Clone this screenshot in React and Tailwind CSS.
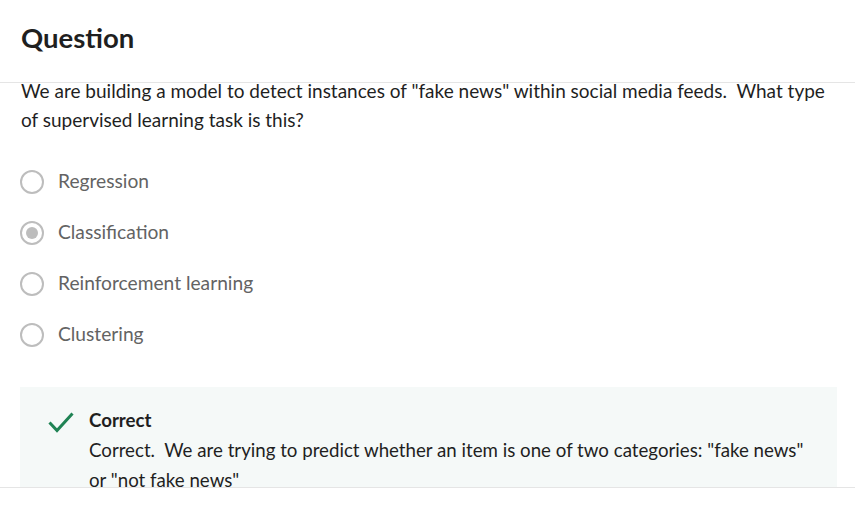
import React from "react";

const font = { fontFamily: '"Source Sans Pro", Lato, "Liberation Sans", sans-serif' };

function Radio({ checked }) {
  return (
    <span className="flex h-[24px] w-[24px] shrink-0 items-center justify-center rounded-full border-2 border-[#bdbdbd]">
      {checked && <span className="h-[12px] w-[12px] rounded-full bg-[#bdbdbd]" />}
    </span>
  );
}

export default function App() {
  const options = ["Regression", "Classification", "Reinforcement learning", "Clustering"];
  return (
    <div className="flex h-[509px] w-[855px] flex-col overflow-hidden bg-white" style={font}>
      <header className="relative z-10 flex h-[83px] shrink-0 items-center border-b border-[#e5e5e5] bg-white px-[21px] pb-[6px]">
        <h2 className="text-[27.5px] font-bold text-[#1f1f1f]">Question</h2>
      </header>
      <main className="flex-1 overflow-hidden pl-[20px] pr-[18px]">
        <p className="-mt-[7px] pl-[1px] text-[19px] leading-[29px] text-[#1f1f1f]">
          We are building a model to detect instances of "fake news" within social media feeds.&nbsp; What type of supervised learning task is this?
        </p>
        <div className="mt-[22px] flex flex-col">
          {options.map((o, i) => (
            <div key={o} className="flex h-[51px] items-center gap-[14px]">
              <Radio checked={i === 1} />
              <span className="text-[19.2px] text-[#636363]">{o}</span>
            </div>
          ))}
        </div>
        <div className="mt-[27px] flex gap-[15px] bg-[#f5f9f8] pl-[28px] pr-[24px] pt-[18px] pb-[20px]">
          <svg width="26" height="22" viewBox="0 0 26 22" className="mt-[6px] shrink-0">
            <path d="M1.5 11.5 L9 19.5 L24.5 2.5" fill="none" stroke="#1f8354" strokeWidth="3" />
          </svg>
          <div className="text-[18.7px] leading-[30px] text-[#1f1f1f]">
            <div className="font-bold">Correct</div>
            <div>Correct.&nbsp; We are trying to predict whether an item is one of two categories: "fake news" or "not fake news"</div>
          </div>
        </div>
      </main>
      <footer className="h-[22px] shrink-0 border-t border-[#e5e5e5] bg-white" />
    </div>
  );
}
